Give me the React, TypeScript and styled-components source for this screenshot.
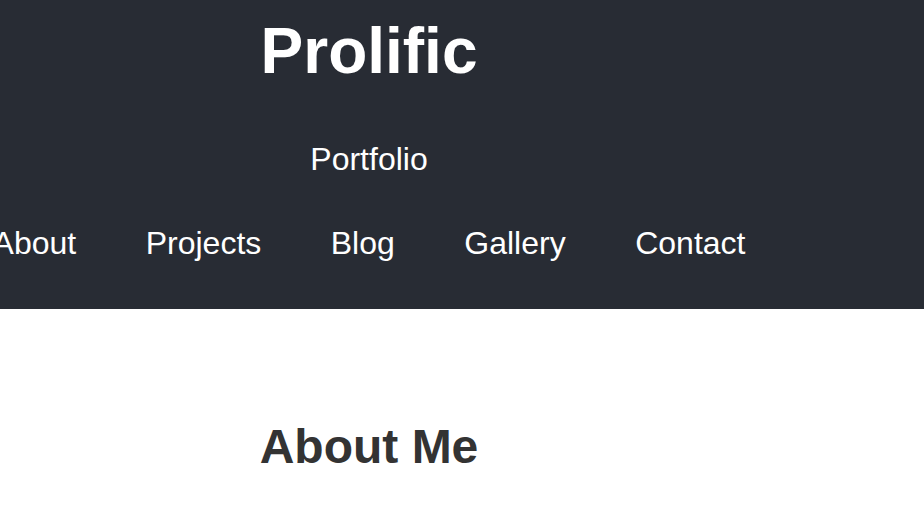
import React from "react";
import styled, { createGlobalStyle } from "styled-components";

const GlobalStyle = createGlobalStyle`
  html, body {
    margin: 0;
    padding: 0;
    background: #ffffff;
    font-family: "Liberation Sans", Arial, sans-serif;
    overflow: hidden;
  }
`;

const Header = styled.header`
  background: #282c34;
  color: #ffffff;
  padding: 14px 0 47px;
`;

const Column = styled.div`
  width: 738px;
  display: flex;
  flex-direction: column;
  align-items: center;
`;

const Title = styled.h1`
  margin: 0;
  font-size: 64px;
  font-weight: 700;
  line-height: normal;
`;

const Subtitle = styled.div`
  margin-top: 53px;
  font-size: 32px;
  line-height: normal;
`;

const Nav = styled.nav`
  margin-top: 47px;
  display: flex;
  justify-content: center;
  gap: 69.5px;
  width: 100%;
`;

const NavLink = styled.a`
  flex-shrink: 0;
  white-space: nowrap;
  color: #ffffff;
  text-decoration: none;
  font-size: 32px;
  line-height: normal;
`;

const Main = styled.main`
  padding-top: 110px;
`;

const SectionTitle = styled.h2`
  margin: 0;
  font-size: 48px;
  font-weight: 700;
  line-height: normal;
  color: #333333;
`;

const links = ["About", "Projects", "Blog", "Gallery", "Contact"];

export default function App() {
  return (
    <>
      <GlobalStyle />
      <Header>
        <Column>
          <Title>Prolific</Title>
          <Subtitle>Portfolio</Subtitle>
          <Nav>
            {links.map((l) => (
              <NavLink key={l} href="#">
                {l}
              </NavLink>
            ))}
          </Nav>
        </Column>
      </Header>
      <Main>
        <Column>
          <SectionTitle>About Me</SectionTitle>
        </Column>
      </Main>
    </>
  );
}
